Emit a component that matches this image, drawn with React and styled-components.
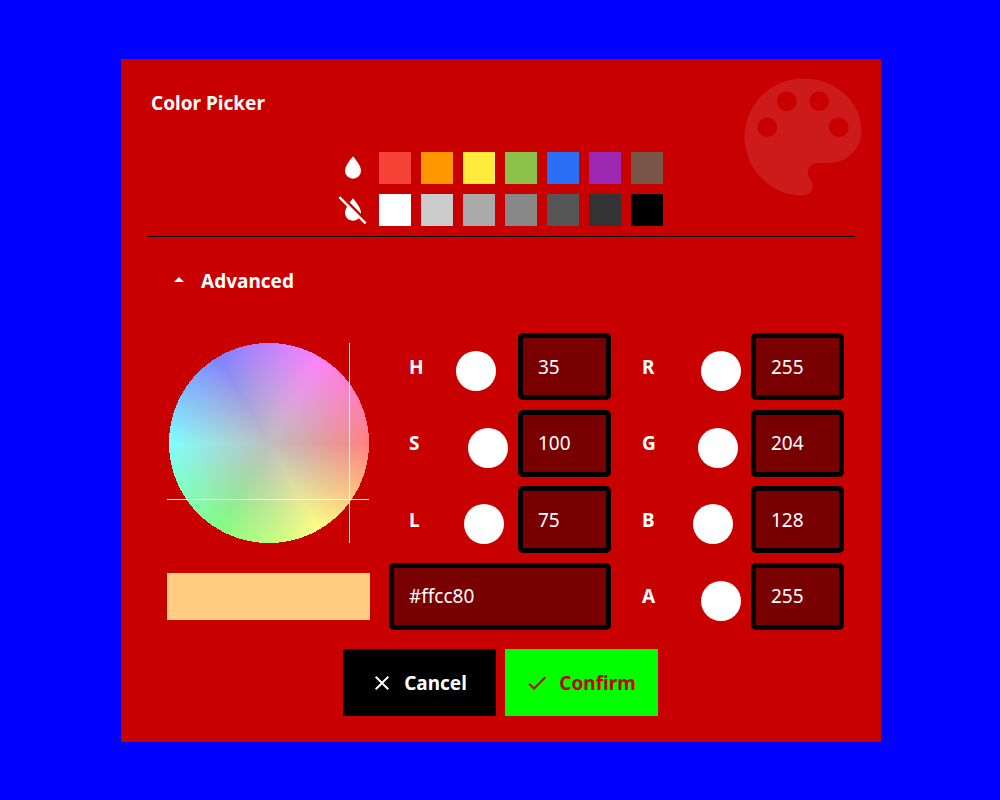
import React from "react";
import styled, { createGlobalStyle } from "styled-components";

const GlobalStyle = createGlobalStyle`
  *, *::before, *::after { box-sizing: border-box; }
  body {
    margin: 0;
    background: #0000ff;
    color: #fff;
    font: 400 19px/28px "Noto Sans", "Open Sans", sans-serif;
  }
  button, input { font: inherit; color: inherit; }
`;

const Page = styled.main`
  display: flex;
  align-items: flex-start;
  min-height: 100vh;
  padding: 59px 119px 58px 121px;
`;

const Panel = styled.form`
  position: relative;
  flex: 1;
  display: flex;
  flex-direction: column;
  min-width: 740px;
  padding: 30px 26px 26px;
  background: #c80000;
`;

const Watermark = styled.svg`
  position: absolute;
  top: 0;
  right: 0;
  width: 156px;
  height: 156px;
  fill: #fff;
  opacity: 0.1;
`;

const Title = styled.h1`
  margin: 0 0 35px;
  padding-left: 4px;
  font-size: 19px;
  line-height: 28px;
  font-weight: 700;
`;

const Palette = styled.div`
  display: grid;
  grid-template-columns: repeat(8, 32px);
  gap: 10px;
  justify-content: center;
  padding: 0 2px 10px 0;
  border-bottom: 1px solid #000;
`;

const Icon = styled.svg`
  flex: none;
  width: ${(p) => p.$size || 24}px;
  height: ${(p) => p.$size || 24}px;
  fill: currentColor;
`;

const Swatch = styled.button`
  width: 32px;
  height: 32px;
  padding: 0;
  border: 0;
  background: ${(p) => p.$color};
  cursor: pointer;
`;

const Disclosure = styled.button`
  display: flex;
  align-items: flex-start;
  align-self: flex-start;
  gap: 10px;
  margin: 30px 0 38px;
  padding: 0 0 0 20px;
  border: 0;
  background: none;
  font-weight: 700;
  line-height: 28px;
`;

const Advanced = styled.div`
  display: grid;
  grid-template-columns: minmax(203px, 1fr) 222px 214px;
  column-gap: 19px;
  padding: 0 11px 0 20px;
`;

const Preview = styled.div`
  display: flex;
  flex-direction: column;
  gap: 30px;
  padding: 10px 0;
`;

const Wheel = styled.div`
  position: relative;
  width: 202px;
  height: 200px;
  padding-left: 2px;
`;

const WheelDisc = styled.div`
  height: 200px;
  background:
    radial-gradient(circle closest-side, #bfbfbf, #bfbfbf00),
    conic-gradient(from 90deg, #ff8080, #ffff80, #80ff80, #80ffff, #8080ff, #ff80ff, #ff8080);
  mask-image: radial-gradient(circle closest-side, #000 100%, transparent 100%);
`;

const CrossX = styled.div`
  position: absolute;
  top: 0;
  bottom: 0;
  width: 1px;
  background: #fff;
`;

const CrossY = styled.div`
  position: absolute;
  left: 0;
  right: 0;
  height: 1px;
  background: #fff;
`;

const Current = styled.div`
  height: 47px;
  background: #ffcc80;
`;

const Fields = styled.div`
  display: flex;
  flex-direction: column;
  justify-content: space-between;
`;

const Field = styled.div`
  display: grid;
  grid-template-columns: minmax(0, 1fr) 56px 93px;
  column-gap: 10px;
  align-items: center;
  padding-left: ${(p) => p.$inset}px;
`;

const FieldLabel = styled.label`
  font-weight: 700;
`;

const Slider = styled.input`
  appearance: none;
  width: 56px;
  height: 40px;
  margin: 9px 0 0;
  background: transparent;

  &::-webkit-slider-thumb {
    appearance: none;
    width: 40px;
    height: 40px;
    border-radius: 50%;
    background: #fff;
  }
`;

const TextBox = styled.input`
  width: 100%;
  height: 67px;
  padding: 0 15px;
  border: 5px solid #000;
  border-radius: 5px;
  outline: none;
  background: #780000;
`;

const Actions = styled.div`
  display: flex;
  justify-content: center;
  gap: 9px;
  margin-top: 19px;
  padding-right: 1px;
`;

const Action = styled.button`
  display: flex;
  align-items: center;
  justify-content: center;
  gap: 10px;
  width: 153px;
  height: 67px;
  padding: 0 2px 0 0;
  border: 0;
  background: ${(p) => (p.$primary ? "#00ff00" : "#000")};
  color: ${(p) => (p.$primary ? "#c80000" : "#fff")};
  font-weight: 700;
`;

const ICONS = {
  water: "M12,20A6,6 0 0,1 6,14C6,10 12,3.25 12,3.25C12,3.25 18,10 18,14A6,6 0 0,1 12,20Z",
  waterOff:
    "M20.84 22.73L16.29 18.18C15.2 19.3 13.69 20 12 20C8.69 20 6 17.31 6 14C6 12.67 6.67 11.03 7.55 9.44L1.11 3L2.39 1.73L22.11 21.46L20.84 22.73M18 14C18 10 12 3.25 12 3.25S10.84 4.55 9.55 6.35L17.95 14.75C18 14.5 18 14.25 18 14Z",
  menuUp: "M7,15L12,10L17,15H7Z",
  close:
    "M19,6.41L17.59,5L12,10.59L6.41,5L5,6.41L10.59,12L5,17.59L6.41,19L12,13.41L17.59,19L19,17.59L13.41,12L19,6.41Z",
  check: "M21,7L9,19L3.5,13.5L4.91,12.09L9,16.17L19.59,5.59L21,7Z",
  palette:
    "M12 3c-4.97 0-9 4.03-9 9s4.03 9 9 9c.83 0 1.5-.67 1.5-1.5 0-.39-.15-.74-.39-1.01-.23-.26-.38-.61-.38-.99 0-.83.67-1.5 1.5-1.5H16c2.76 0 5-2.24 5-5 0-4.42-4.03-8-9-8zm-5.5 9c-.83 0-1.5-.67-1.5-1.5S5.67 9 6.5 9 8 9.67 8 10.5 7.33 12 6.5 12zm3-4C8.67 8 8 7.33 8 6.5S8.67 5 9.5 5s1.5.67 1.5 1.5S10.33 8 9.5 8zm5 0c-.83 0-1.5-.67-1.5-1.5S13.67 5 14.5 5s1.5.67 1.5 1.5S15.33 8 14.5 8zm3 4c-.83 0-1.5-.67-1.5-1.5S16.67 9 17.5 9s1.5.67 1.5 1.5-.67 1.5-1.5 1.5z",
};

const VIVID = ["#f44336", "#ff9800", "#ffeb3b", "#8bc34a", "#2a6ff5", "#9c27b0", "#795548"];
const GRAYS = ["#ffffff", "#cccccc", "#aaaaaa", "#888888", "#555555", "#333333", "#000000"];

const HSL = [
  { name: "H", value: 35, max: 140 },
  { name: "S", value: 100, max: 100 },
  { name: "L", value: 75, max: 100 },
];
const RGBA = [
  { name: "R", value: 255, max: 255 },
  { name: "G", value: 204, max: 255 },
  { name: "B", value: 128, max: 255 },
  { name: "A", value: 255, max: 255 },
];

function Glyph({ name, size }) {
  return (
    <Icon viewBox="0 0 24 24" $size={size} aria-hidden="true">
      <path d={ICONS[name]} />
    </Icon>
  );
}

function SwatchRow({ icon, colors }) {
  return (
    <>
      <Glyph name={icon} size={32} />
      {colors.map((c) => (
        <Swatch key={c} type="button" $color={c} aria-label={c} />
      ))}
    </>
  );
}

function Channel({ name, value, max, inset }) {
  return (
    <Field $inset={inset}>
      <FieldLabel htmlFor={`value-${name}`}>{name}</FieldLabel>
      <Slider type="range" min="0" max={max} defaultValue={value} step="any" aria-label={name} />
      <TextBox id={`value-${name}`} type="text" defaultValue={value} />
    </Field>
  );
}

function ColorWheel({ hue, saturation }) {
  const angle = (hue * Math.PI) / 180;
  const radius = 0.98 * saturation;
  const x = Math.round(102 + radius * Math.cos(angle));
  const y = Math.round(100 + radius * Math.sin(angle));
  return (
    <Wheel>
      <WheelDisc />
      <CrossX style={{ left: x }} />
      <CrossY style={{ top: y }} />
    </Wheel>
  );
}

export default function App() {
  return (
    <>
      <GlobalStyle />
      <Page>
        <Panel onSubmit={(e) => e.preventDefault()}>
          <Watermark viewBox="0 0 24 24" aria-hidden="true">
            <path d={ICONS.palette} />
          </Watermark>
          <Title>Color Picker</Title>
          <Palette>
            <SwatchRow icon="water" colors={VIVID} />
            <SwatchRow icon="waterOff" colors={GRAYS} />
          </Palette>
          <Disclosure type="button" aria-expanded="true">
            <Glyph name="menuUp" />
            Advanced
          </Disclosure>
          <Advanced>
            <Preview>
              <ColorWheel hue={35} saturation={100} />
              <Current />
            </Preview>
            <Fields>
              {HSL.map((c) => (
                <Channel key={c.name} {...c} inset={20} />
              ))}
              <TextBox type="text" defaultValue="#ffcc80" aria-label="Hex color" />
            </Fields>
            <Fields>
              {RGBA.map((c) => (
                <Channel key={c.name} {...c} inset={12} />
              ))}
            </Fields>
          </Advanced>
          <Actions>
            <Action type="button">
              <Glyph name="close" />
              Cancel
            </Action>
            <Action type="submit" $primary>
              <Glyph name="check" />
              Confirm
            </Action>
          </Actions>
        </Panel>
      </Page>
    </>
  );
}
